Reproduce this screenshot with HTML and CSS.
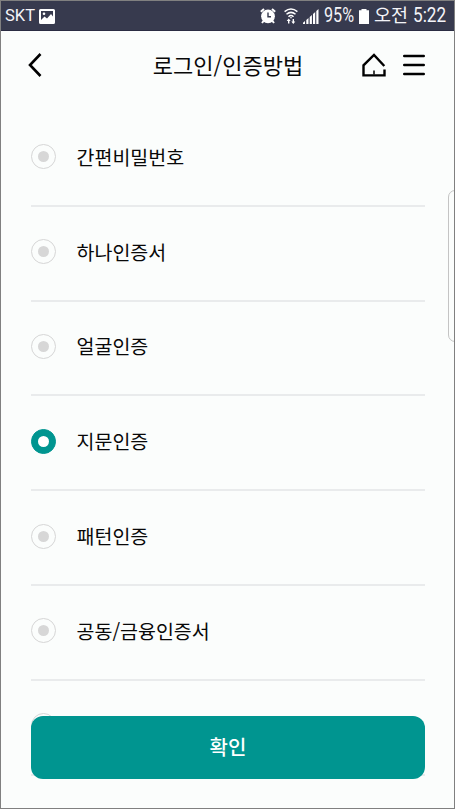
FILE: index.html
```html
<!DOCTYPE html>
<html lang="ko">
<head>
<meta charset="utf-8">
<title>로그인/인증방법</title>
<link rel="stylesheet" href="styles.css">
</head>
<body>
<div class="screen">
  <div class="status">
    <span class="carrier">SKT</span>
    <svg class="picture" width="16" height="15" viewBox="0 0 16 15"><path fill="#fff" fill-rule="evenodd" d="M1.500 0h13q1.500 0 1.500 1.500v12q0 1.500-1.500 1.500h-13q-1.500 0-1.500-1.500v-12q0-1.500 1.500-1.500zM2 2v9l3.500-3.500 2.500 2 4-4.500 2 2.500v-5.500z"/><circle cx="5" cy="4.700" r="1.300" fill="#fff"/></svg>
    <svg class="alarm" width="16" height="16" viewBox="0 0 16 16"><circle cx="8" cy="8.300" r="6.900" fill="#fff"/><path d="M.8 3.800L4 1M15.200 3.800L12 1M3.500 13L2 15M12.500 13L14 15" stroke="#fff" stroke-width="2"/><path d="M8 4.500v4.300h3" fill="none" stroke="#373a4e" stroke-width="1.400"/></svg>
    <svg class="wifi" width="14" height="16" viewBox="0 0 14 16"><g fill="none" stroke="#fff" stroke-width="1.500"><path d="M.6 3.700Q7-1.500 13.400 3.700M2.500 6.300Q7 2.500 11.500 6.300M4.500 8.700Q7 6.300 9.500 8.700"/></g><path fill="#fff" d="M7 10.800L5.800 9.300h2.400zM4.700 10.500l2 2.500H5.400v2.500H4V13H2.700zM9.300 16l-2-2.500h1.300V11H10v2.500h1.300z"/></svg>
    <svg class="signal" width="16" height="15" viewBox="0 0 16 15"><path fill="#fff" d="M0 15v-1.200L2 12v3zM3.300 15v-4l2.200-2v6zM6.700 15V8l2.200-2v9zM10 15V5l2.200-2v12zM13.300 15V2L15.500 0v15z"/></svg>
    <span class="percent">95%</span>
    <svg class="battery" width="10" height="15" viewBox="0 0 10 15"><path fill="#fff" d="M2.500 0h5v1.200H10V15H0V1.200h2.500z"/></svg>
    <span class="meridiem">오전</span>
    <span class="clock">5:22</span>
  </div>
  <header class="header">
    <svg class="back" width="16" height="26" viewBox="0 0 16 26"><path d="M13.500 2L3 13l10.500 11" fill="none" stroke="#000" stroke-width="2.600"/></svg>
    <h1 class="title">로그인/인증방법</h1>
    <svg class="home" width="24" height="24" viewBox="0 0 24 24"><path d="M22.300 13L12 2 1.500 12.300V22.400h21v-6" fill="none" stroke="#000" stroke-width="2.400"/><path d="M12 17.500v4" stroke="#000" stroke-width="1.500"/></svg>
    <svg class="menu" width="22" height="22" viewBox="0 0 22 22"><path d="M1.200 2h19.600M1.200 11h19.600M1.200 20h19.600" fill="none" stroke="#000" stroke-width="2.400" stroke-linecap="round"/></svg>
  </header>
  <ul class="list">
    <li class="row"><i class="radio"></i><span>간편비밀번호</span></li>
    <li class="row"><i class="radio"></i><span>하나인증서</span></li>
    <li class="row"><i class="radio"></i><span>얼굴인증</span></li>
    <li class="row"><i class="radio checked"></i><span>지문인증</span></li>
    <li class="row"><i class="radio"></i><span>패턴인증</span></li>
    <li class="row"><i class="radio"></i><span>공동/금융인증서</span></li>
    <li class="row"><i class="radio"></i></li>
  </ul>
  <div class="edge-handle"></div>
  <div class="confirm">확인</div>
</div>
</body>
</html>
```
FILE: styles.css
```css
* { box-sizing: border-box; }
body { margin: 0; }
.screen {
  position: relative;
  width: 455px;
  height: 809px;
  overflow: hidden;
  border: 1px solid #808080;
  background: #fbfdfc;
  color: #080808;
  font-family: "Noto Sans CJK KR", sans-serif;
}
.status {
  display: flex;
  align-items: center;
  height: 30px;
  padding: 1px 7px 0 4px;
  border-bottom: 1px solid #2a2c42;
  background: #373a4e;
  color: #f4f4f8;
  font-family: Roboto, "Noto Sans CJK KR", sans-serif;
  font-size: 19.5px;
  line-height: 28px;
  white-space: nowrap;
}
.carrier { width: 34px; font-size: 16.5px; }
.alarm { margin-left: 205px; }
.wifi { margin-left: 8px; }
.signal { margin-left: 5px; }
.percent, .clock { transform-origin: left center; }
.percent { width: 31px; margin-left: 5px; transform: scaleX(.83); }
.battery { margin-left: 4px; }
.meridiem { width: 33px; margin-left: 5px; font-size: 18.5px; }
.clock { width: 32px; margin-left: 6px; transform: scaleX(.88); }
.header {
  display: flex;
  align-items: center;
  height: 70px;
  padding: 0 29px 2px 26px;
}
.title {
  flex: 1;
  margin: 0 0 2px;
  padding-left: 51px;
  text-align: center;
  font-size: 22px;
  font-weight: 400;
  line-height: 32px;
}
.menu { margin-left: 17px; }
.list {
  margin: 11px 29px 0 30px;
  padding: 0;
  list-style: none;
}
.row {
  display: flex;
  align-items: center;
  gap: 20.5px;
  height: 94.8px;
  padding-bottom: 3px;
  border-bottom: 2px solid #e9ebec;
  font-size: 19.5px;
  line-height: 28px;
}
.radio {
  display: flex;
  align-items: center;
  justify-content: center;
  width: 25px;
  height: 25px;
  border: 1px solid #d6d6d6;
  border-radius: 50%;
}
.radio::before {
  content: "";
  width: 11px;
  height: 11px;
  border-radius: 50%;
  background: #d7d7d7;
}
.radio.checked { border-color: #009590; background: #009590; }
.radio.checked::before { background: #fff; }
.edge-handle {
  position: absolute;
  top: 189px;
  right: -8px;
  width: 14px;
  height: 152px;
  border: 1px solid #c4c4c4;
  border-radius: 7px;
}
.confirm {
  position: absolute;
  right: 29px;
  bottom: 29px;
  left: 30px;
  height: 63px;
  border-radius: 12px;
  background: #009590;
  color: #fff;
  text-align: center;
  font-size: 20px;
  font-weight: 500;
  line-height: 62px;
}
```
